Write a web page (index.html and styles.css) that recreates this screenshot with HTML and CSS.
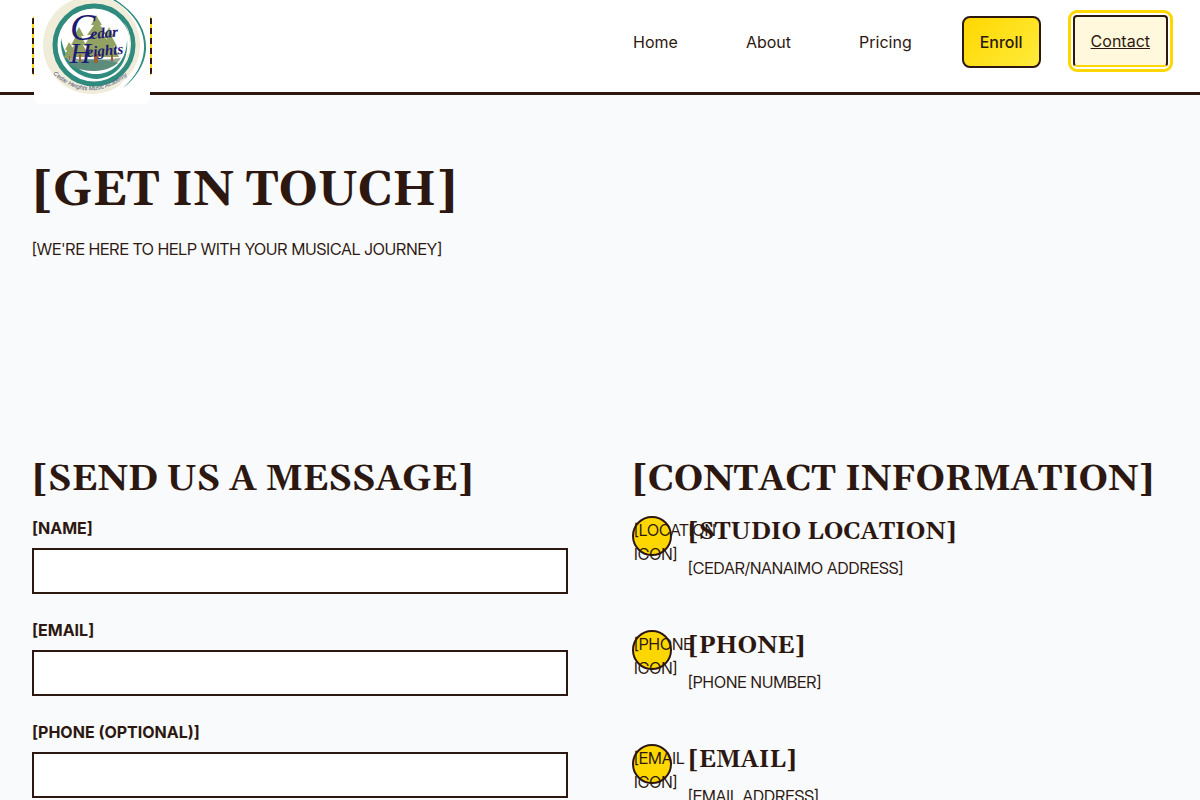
FILE: index.html
```html
<!DOCTYPE html>
<html lang="en">
<head>
<meta charset="utf-8">
<meta name="viewport" content="width=device-width, initial-scale=1">
<title>Contact | Cedar Heights Music Academy</title>
<link rel="stylesheet" href="styles.css">
</head>
<body>
<header class="site-header">
  <a class="brand" href="#" aria-label="Cedar Heights Music Academy">
    <svg class="brand-logo" viewBox="34 -12 116 116" role="img" aria-hidden="true">
      <circle cx="92" cy="45" r="49" fill="#efecd9"/>
      <path d="M123 6C138 18 146 33 145 50C144 65 135 79 123 88L118 80Q137 66 138 44Q138 20 118 3Z" fill="#fff"/>
      <path d="M116 2Q140 20 140 45Q140 68 120 84L112 80L128 45L112 8Z" fill="#efecd9"/>
      <path d="M60 0C84-13 108-8 124 6C139 18 147 33 146 50C145 65 135 79 123 88C137 75 143 63 144 49C145 33 137 18 122 6C107-6 84-12 60 0Z" fill="#2f8b7d"/>
      <circle cx="94" cy="45" r="39" fill="#fff" stroke="#2f8b7d" stroke-width="5"/>
      <path d="M124 22A38 38 0 0 1 112 77A42 42 0 0 0 124 22Z" fill="#efecd9"/>
      <path d="M61 38C59 62 76 78 97 79C118 77 129 61 127 39C127 60 114 73 98 74C80 75 65 61 61 38Z" fill="#2f8b7d"/>
      <path d="M66 57Q91 62 121 58Q114 70 94 71Q74 70 66 57Z" fill="#9aa897"/>
      <path d="M69 64Q93 55 118 63Q110 70 94 71Q77 71 69 64Z" fill="#5c8d7c"/>
      <g fill="#92a262">
        <path d="M96 15L91 25L94 25L87 35L91 35L84 46L89 46L80 57L116 57L106 45L110 45L103 34L106 34L100 25L102 25Z"/>
        <path d="M79 27L74 36L76 36L71 45L74 45L67 57L90 57L83 45L86 45L81 36L84 36Z"/>
        <path d="M109 27L104 38L107 38L99 57L119 57L114 46L117 46L112 37L114 37Z"/>
        <path d="M69 42L65 50L67 50L64 58L75 58L72 50L74 50Z"/>
      </g>
      <path d="M79 54h2v8h-2zM94 54h4v9h-4zM111 55h2v6h-2zM69 56h1v4h-1z" fill="#9b633c"/>
      <g class="brand-script">
        <text x="70" y="40" font-size="38">C</text>
        <text x="70" y="63" font-size="29">H</text>
        <text class="brand-small" x="91" y="39" transform="rotate(-5 91 39)">edar</text>
        <text class="brand-small" x="87" y="57" transform="rotate(-5 87 57)">eights</text>
      </g>
      <path id="logo-arc" d="M53 74Q92 109 135 69" fill="none"/>
      <text class="brand-motto"><textPath href="#logo-arc">Cedar Heights Music Academy</textPath></text>
    </svg>
  </a>
  <nav class="nav" aria-label="Main">
    <a class="nav-link" href="#">Home</a>
    <a class="nav-link" href="#">About</a>
    <a class="nav-link" href="#">Pricing</a>
    <a class="nav-link nav-enroll" href="#">Enroll</a>
    <a class="nav-link nav-current" href="#" aria-current="page">Contact</a>
  </nav>
</header>
<main>
  <section class="hero">
    <h1>[GET IN TOUCH]</h1>
    <p>[WE'RE HERE TO HELP WITH YOUR MUSICAL JOURNEY]</p>
  </section>
  <div class="columns">
    <section>
      <h2>[SEND US A MESSAGE]</h2>
      <form class="form">
        <div class="field"><label for="name">[NAME]</label><input id="name" type="text"></div>
        <div class="field"><label for="email">[EMAIL]</label><input id="email" type="email"></div>
        <div class="field"><label for="phone">[PHONE (OPTIONAL)]</label><input id="phone" type="tel"></div>
      </form>
    </section>
    <section>
      <h2>[CONTACT INFORMATION]</h2>
      <div class="info">
        <div class="info-item"><div class="info-icon">[LOCATION ICON]</div><div><h3>[STUDIO LOCATION]</h3><p>[CEDAR/NANAIMO ADDRESS]</p></div></div>
        <div class="info-item"><div class="info-icon">[PHONE ICON]</div><div><h3>[PHONE]</h3><p>[PHONE NUMBER]</p></div></div>
        <div class="info-item"><div class="info-icon">[EMAIL ICON]</div><div><h3>[EMAIL]</h3><p>[EMAIL ADDRESS]</p></div></div>
      </div>
    </section>
  </div>
</main>
</body>
</html>
```

FILE: styles.css
```css
* { box-sizing: border-box; }
body {
  margin: 0;
  background: #f8fafc;
  color: #2c1810;
  font: 400 16px/24px "Inter Display", Inter, "Liberation Sans", sans-serif;
}
h1, h2, h3, p { margin: 0; }
h1, h2, h3 { font-family: Georgia, Gelasio, "Liberation Serif", serif; font-weight: 700; }
h1 { font-size: 48px; line-height: 64px; margin-bottom: 14px; }
h2 { font-size: 36px; line-height: 48px; margin-bottom: 12px; }
h3 { font-size: 24px; line-height: 32px; margin-bottom: 8px; }

.site-header {
  display: flex;
  justify-content: space-between;
  align-items: flex-start;
  padding: 16px 32px;
  background: #fff;
  border-bottom: 3px solid #2c1810;
}
.brand {
  display: flex;
  align-items: center;
  justify-content: center;
  width: 120px;
  height: 60px;
  border-radius: 4px;
  background: repeating-linear-gradient(#ffd700 0 2px, #2c1810 2px 8px, #ffd700 8px 10px);
}
.brand-logo {
  flex: none;
  width: 116px;
  height: 116px;
  border-radius: 6px;
  background: #fff;
}
.brand-script { fill: #1d1b75; font-family: "Liberation Serif", serif; font-style: italic; }
.brand-small { font-size: 15px; font-weight: 700; }
.brand-motto { fill: #4d5278; font: italic 6px "Liberation Sans", sans-serif; }

.nav { display: flex; gap: 32px; }
.nav-link {
  padding: 12px 16px;
  border: 2px solid transparent;
  border-radius: 4px;
  color: inherit;
  font-family: Inter, "Liberation Sans", sans-serif;
  text-decoration: none;
}
.nav-enroll {
  border-color: #2c1810;
  border-radius: 8px;
  background: linear-gradient(135deg, #ffd700, #ffeb3b);
  font-weight: 500;
}
.nav-current {
  border-color: #2c1810 #2c1810 #ffd700;
  background: #fff8dc;
  outline: 3px solid #ffd700;
  outline-offset: 2px;
  text-decoration: underline;
  transform: translateY(-1px);
}

.hero {
  min-height: 361px;
  padding: 64px 32px;
}
.columns {
  display: grid;
  grid-template-columns: 1fr 1fr;
  gap: 64px;
  padding: 0 32px 64px;
}
.form { display: grid; gap: 24px; }
.field { display: grid; gap: 8px; }
.field label { font-family: Inter, "Liberation Sans", sans-serif; font-weight: 700; }
.field input {
  width: 100%;
  height: 46px;
  padding: 12px;
  border: 2px solid #2c1810;
  border-radius: 0;
  background: #fff;
  color: inherit;
  font: inherit;
}
.info { display: grid; gap: 50px; }
.info-item { display: flex; gap: 16px; }
.info-icon {
  flex: none;
  width: 40px;
  height: 40px;
  border: 2px solid #2c1810;
  border-radius: 50%;
  background: #ffd700;
}
```
